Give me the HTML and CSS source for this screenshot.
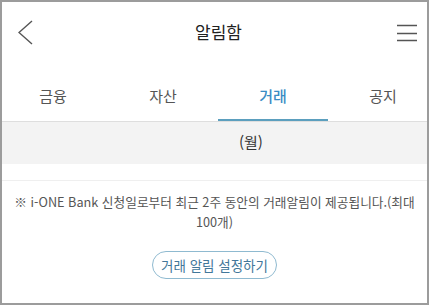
FILE: index.html
```html
<!DOCTYPE html>
<html lang="ko">
<head>
<meta charset="utf-8">
<link rel="stylesheet" href="styles.css">
</head>
<body>
<div class="frame">
  <header class="topbar">
    <svg class="icon-back" width="16" height="26" viewBox="0 0 16 26"><polyline points="14,1 1,12.5 14,24" fill="none" stroke="#555" stroke-width="1.4"/></svg>
    <h1 class="title">알림함</h1>
    <svg class="icon-menu" width="20" height="18" viewBox="0 0 20 18"><path d="M0 1.5H20M0 9.5H20M0 16.5H20" stroke="#555" stroke-width="1.3"/></svg>
  </header>
  <nav class="tabs">
    <div class="tab">금융</div>
    <div class="tab">자산</div>
    <div class="tab active">거래</div>
    <div class="tab">공지</div>
  </nav>
  <div class="dateband"><span class="day">(월)</span></div>
  <div class="spacer"></div>
  <p class="notice">※ i-ONE Bank 신청일로부터 최근 2주 동안의 거래알림이 제공됩니다.(최대 100개)</p>
  <div class="actions"><button class="setbtn">거래 알림 설정하기</button></div>
</div>
</body>
</html>
```
FILE: styles.css
```css
* { box-sizing: border-box; }
html, body { margin: 0; padding: 0; background: #fff; }
body { font-family: "Noto Sans CJK KR", "Noto Sans", sans-serif; color: #333; }
.frame {
  width: 429px;
  height: 305px;
  border: 2px solid #9c9c9c;
  overflow: hidden;
  background: #fff;
}
.topbar {
  height: 60px;
  display: flex;
  align-items: center;
  justify-content: space-between;
  padding: 0 10px 0 16px;
}
.icon-back { display: block; margin-top: 1px; }
.icon-menu { display: block; margin-top: 1px; }
.title {
  margin: 0;
  font-size: 17px;
  font-weight: 400;
  color: #222;
  line-height: 24px;
  margin-left: 6px;
}
.tabs {
  display: grid;
  grid-template-columns: repeat(4, 110px);
  margin-left: -4px;
  width: 440px;
  border-bottom: 1px solid #dedede;
}
.tab {
  height: 59px;
  padding-top: 24px;
  line-height: 20px;
  text-align: center;
  font-size: 15px;
  color: #555;
}
.tab.active {
  color: #3a8cc4;
  font-weight: 500;
  box-shadow: inset 0 -2px 0 #5b9fbe;
}
.dateband {
  height: 42px;
  background: #f3f3f3;
  padding-left: 237px;
  line-height: 40px;
  font-size: 15px;
  color: #333;
}
.spacer {
  height: 17px;
  border-bottom: 1px solid #efefef;
}
.notice {
  margin: 11px 0 0;
  padding: 0 12px;
  text-align: center;
  font-size: 12.7px;
  line-height: 20px;
  color: #555;
}
.actions {
  display: flex;
  justify-content: center;
  margin-top: 19px;
}
.setbtn {
  width: 125px;
  height: 28px;
  border: 1px solid #8fbad0;
  border-radius: 14px;
  background: #fff;
  font-family: inherit;
  font-size: 13.5px;
  color: #42779a;
  padding: 0;
  line-height: 26px;
}
```
